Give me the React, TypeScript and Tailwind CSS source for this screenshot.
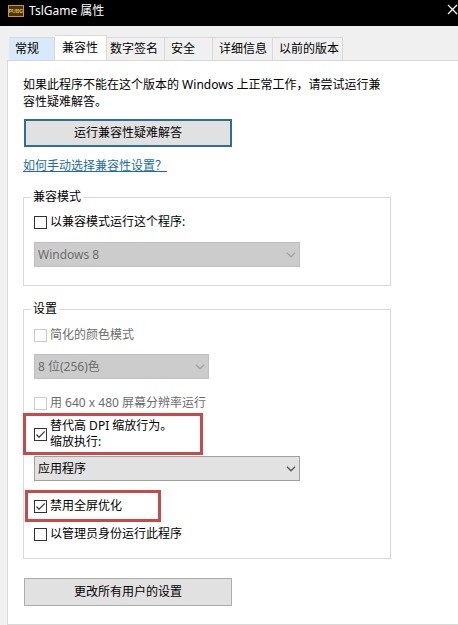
import React from 'react';
import { clsx } from 'clsx';

const TABS = [
  { label: '常规', className: 'w-[46px] px-[6px] bg-[#d8eaf9]' },
  { label: '兼容性', className: 'w-[52px] px-[7px]', active: true },
  { label: '数字签名', className: 'w-[58px] px-[3px]' },
  { label: '安全', className: 'w-[48px] px-[6px]' },
  { label: '详细信息', className: 'w-[60px] px-[6px]' },
  { label: '以前的版本', className: 'w-[70px] px-[6px]' },
];

interface CheckProps {
  id: string;
  children: React.ReactNode;
  checked?: boolean;
  disabled?: boolean;
}

const Check: React.FC<CheckProps> = ({ id, children, checked, disabled }) => (
  <div className="flex items-center gap-[3px]">
    <span className="relative h-[13px] w-[13px] shrink-0">
      <input
        id={id}
        type="checkbox"
        defaultChecked={checked}
        disabled={disabled}
        className="peer block h-[13px] w-[13px] appearance-none border border-[#333] bg-white disabled:border-[#ccc]"
      />
      <svg
        viewBox="0 0 13 13"
        className="pointer-events-none absolute inset-0 hidden h-[13px] w-[13px] peer-checked:block"
        fill="none"
        stroke="#444"
        strokeWidth="1.3"
      >
        <path d="M2.5 6.5 L5 9.2 L10.8 3.4" />
      </svg>
    </span>
    <label htmlFor={id} className={clsx('leading-4', disabled && 'text-[#6d6d6d]')}>
      {children}
    </label>
  </div>
);

interface DropdownProps {
  label: string;
  value: string;
  className: string;
  disabled?: boolean;
}

const Dropdown: React.FC<DropdownProps> = ({ label, value, className, disabled }) => (
  <div className={clsx('relative max-w-full', className)}>
    <select
      aria-label={label}
      disabled={disabled}
      className={clsx(
        'block h-[25px] w-full appearance-none border px-[3px] opacity-100',
        disabled ? 'border-[#bfbfbf] bg-[#ccc] text-[#6d6d6d]' : 'border-[#a0a0a0] bg-[#e2e2e2]'
      )}
    >
      <option>{value}</option>
    </select>
    <svg
      viewBox="0 0 10 6"
      className="pointer-events-none absolute top-[10px] right-1 h-[6px] w-[10px]"
      fill="none"
      stroke={disabled ? '#a3a3a3' : '#555'}
      strokeWidth="1.3"
    >
      <path d="M1 0.8 L5 4.8 L9 0.8" />
    </svg>
  </div>
);

export default function App() {
  return (
    <div className="min-h-screen overflow-hidden bg-[#f0f0f0] font-['Noto_Sans','Noto_Sans_CJK_SC',sans-serif] text-xs text-black">
      {/* Title bar */}
      <header className="flex h-[26px] items-start justify-between bg-black pl-2 text-white">
        <div className="flex items-center gap-[5px]">
          <svg viewBox="0 0 16 12" className="h-3 w-4">
            <rect x="0.5" y="0.5" width="15" height="11" fill="#4a3408" stroke="#c9982a" />
            <text x="8" y="8" textAnchor="middle" fontSize="5" fontWeight="bold" fill="#f0bd3c" fontFamily="Liberation Sans">
              PUBG
            </text>
          </svg>
          <h1 className="leading-[21px]">TslGame 属性</h1>
        </div>
        <button type="button" aria-label="关闭" className="mt-1">
          <svg viewBox="0 0 11 11" className="h-[11px] w-[11px]" fill="none" stroke="#fff" strokeWidth="1.2">
            <path d="M1 1 L10 10 M10 1 L1 10" />
          </svg>
        </button>
      </header>

      {/* Tabs */}
      <div role="tablist" className="flex items-end pt-[9px] pl-[9px]">
        {TABS.map((tab) => (
          <button
            key={tab.label}
            type="button"
            role="tab"
            aria-selected={!!tab.active}
            className={clsx(
              'shrink-0 border-t border-r border-[#d9d9d9] text-left whitespace-nowrap',
              tab.active ? 'h-[25px] bg-white' : 'h-[23px]',
              tab.className
            )}
          >
            {tab.label}
          </button>
        ))}
      </div>

      {/* Compatibility page */}
      <main className="ml-[7px] border-y border-l border-[#d9d9d9] bg-white px-[15px] pt-[15px] pb-[18px]">
        <div className="max-w-[368px]">
          <p className="leading-[17px]">
            如果此程序不能在这个版本的 Windows 上正常工作，请尝试运行兼容性疑难解答。
          </p>
          <button type="button" className="mt-[9px] ml-px block h-7 w-[208px] border-2 border-[#2f6f96] bg-[#e1e1e1]">
            运行兼容性疑难解答
          </button>
          <a href="#" className="mt-[11px] block w-fit leading-4 text-[#1a6ea8] underline">
            如何手动选择兼容性设置？
          </a>

          <fieldset className="mt-[15px] border border-[#d9d9d9] px-[10px] pb-[18px]">
            <legend className="-ml-[3px] px-[2px] leading-4">兼容模式</legend>
            <div className="mt-[9px] flex flex-col gap-3">
              <Check id="compat">以兼容模式运行这个程序:</Check>
              <Dropdown label="兼容模式" value="Windows 8" className="w-[266px]" disabled />
            </div>
          </fieldset>

          <fieldset className="mt-[15px] border border-[#d9d9d9] px-[10px] pb-4">
            <legend className="-ml-[3px] px-[2px] leading-4">设置</legend>
            <div className="mt-[10px] flex flex-col">
              <Check id="color" disabled>简化的颜色模式</Check>
              <Dropdown label="颜色" value="8 位(256)色" className="mt-[11px] w-[175px]" disabled />
              <div className="mt-4">
                <Check id="res" disabled>用 640 x 480 屏幕分辨率运行</Check>
              </div>
              <div className="relative mt-[7px] w-[158px]">
                <Check id="dpi" checked>
                  替代高 DPI 缩放行为。
                  <br />
                  缩放执行:
                </Check>
                <span className="pointer-events-none absolute -inset-x-[11px] -inset-y-[5px] border-[3px] border-[#c9484a]" />
              </div>
              <Dropdown label="缩放执行" value="应用程序" className="mt-[6px] w-[266px]" />
              <div className="relative mt-[17px] w-[118px]">
                <Check id="fullscreen" checked>禁用全屏优化</Check>
                <span className="pointer-events-none absolute -inset-x-[9px] -inset-y-2 border-[3px] border-[#c9484a]" />
              </div>
              <div className="mt-3">
                <Check id="admin">以管理员身份运行此程序</Check>
              </div>
            </div>
          </fieldset>

          <button type="button" className="mt-[19px] ml-px block h-7 w-[208px] border border-[#adadad] bg-[#e1e1e1]">
            更改所有用户的设置
          </button>
        </div>
      </main>
    </div>
  );
}
